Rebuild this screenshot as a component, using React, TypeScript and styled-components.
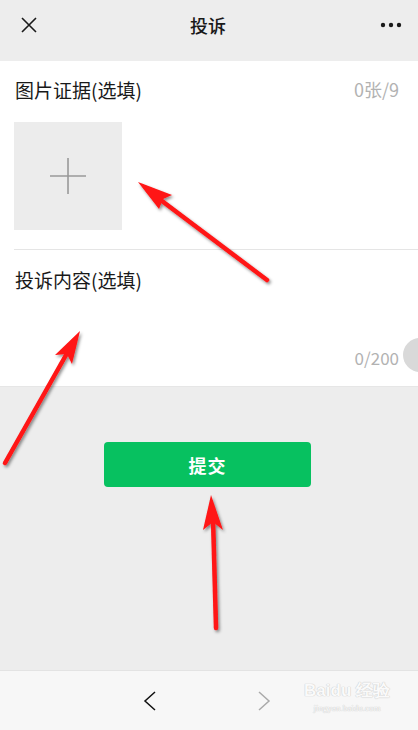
import React from "react";
import styled, { createGlobalStyle } from "styled-components";

const GlobalStyle = createGlobalStyle`
  html, body, #root {
    margin: 0;
    padding: 0;
    height: 100%;
  }
  body {
    overflow: hidden;
    font-family: "Noto Sans CJK SC", "Noto Sans", Roboto, sans-serif;
  }
`;

const Page = styled.div`
  position: relative;
  height: 730px;
  display: flex;
  flex-direction: column;
  background: #ededed;
  overflow: hidden;
`;

const Header = styled.div`
  height: 50px;
  display: flex;
  align-items: center;
  justify-content: space-between;
  padding: 0 16px 0 18px;
`;

const Title = styled.h1`
  margin: 0 0 0 -4px;
  font-size: 18px;
  font-weight: 500;
  color: #191919;
`;

const IconBox = styled.div`
  width: 22px;
  height: 22px;
  display: flex;
  align-items: center;
  justify-content: center;
`;

const Section = styled.div`
  margin-top: 11px;
  background: #fff;
  border-bottom: 1px solid #e6e6e6;
`;

const PhotoBlock = styled.div`
  padding: 16px 19px 19px 14px;
`;

const HeadRow = styled.div`
  display: flex;
  justify-content: space-between;
  align-items: center;
  height: 24px;
`;

const Label = styled.span`
  font-size: 19px;
  color: #191919;
  padding-left: 1px;
`;

const Hint = styled.span<{ $size?: number }>`
  font-size: ${(p) => p.$size ?? 18}px;
  color: #b2b2b2;
`;

const UploadBox = styled.div`
  margin-top: 21px;
  width: 108px;
  height: 108px;
  background: #ececec;
  display: flex;
  align-items: center;
  justify-content: center;
`;

const Divider = styled.div`
  margin-left: 14px;
  border-top: 1px solid #e5e5e5;
`;

const ContentBlock = styled.div`
  position: relative;
  padding: 17px 19px 18px 14px;
`;

const TextArea = styled.div`
  height: 57px;
`;

const Counter = styled.div`
  text-align: right;
  height: 20px;
  line-height: 20px;
`;

const FloatBall = styled.div`
  position: absolute;
  right: -19px;
  top: 88px;
  width: 34px;
  height: 34px;
  border-radius: 50%;
  background: #d9d9d9;
`;

const Footer = styled.div`
  flex: 1;
  display: flex;
  justify-content: center;
  align-items: flex-start;
  padding-top: 55px;
`;

const SubmitButton = styled.button`
  width: 207px;
  height: 45px;
  margin-left: -3px;
  border: none;
  border-radius: 4px;
  background: #07c160;
  color: #fff;
  font-family: inherit;
  font-size: 18px;
  font-weight: 700;
  letter-spacing: 1px;
`;

const BottomBar = styled.div`
  position: relative;
  height: 59px;
  border-top: 1px solid #e3e3e3;
  background: #f7f7f7;
  display: flex;
  align-items: center;
  justify-content: center;
  gap: 94px;
  padding-right: 4px;
`;

const Watermark = styled.div`
  position: absolute;
  right: 28px;
  top: 11px;
  display: flex;
  flex-direction: column;
  align-items: center;
  color: #fafafa;
  text-shadow: 0 0 1px #c8c8c8, 0 0 1px #c8c8c8;
  font-family: "Liberation Sans", sans-serif;
  font-weight: 700;
  line-height: 1;
`;

const MarkTop = styled.span`
  font-size: 17px;
`;

const MarkBottom = styled.span`
  margin-top: 5px;
  font-size: 9px;
  font-weight: 400;
  font-family: "Liberation Serif", serif;
`;

const Overlay = styled.svg`
  position: absolute;
  left: 0;
  top: 0;
  pointer-events: none;
`;

const arrows = [
  { shaft: "M267 280 L158 198", head: "138,182 172,195 163,199 159,209" },
  { shaft: "M5 463 L70 348", head: "80,331 72,364 67,354 55,355" },
  { shaft: "M216 628 L213 518", head: "211,495 223,530 213,522 203,530" },
];

export default function App() {
  return (
    <Page>
      <GlobalStyle />
      <Header>
        <IconBox>
          <svg width="18" height="18" viewBox="0 0 18 18">
            <path d="M2 2 L16 16 M16 2 L2 16" stroke="#1a1a1a" strokeWidth="1.6" />
          </svg>
        </IconBox>
        <Title>投诉</Title>
        <IconBox>
          <svg width="22" height="6" viewBox="0 0 22 6">
            <circle cx="3" cy="3" r="2.2" fill="#1a1a1a" />
            <circle cx="11" cy="3" r="2.2" fill="#1a1a1a" />
            <circle cx="19" cy="3" r="2.2" fill="#1a1a1a" />
          </svg>
        </IconBox>
      </Header>

      <Section>
        <PhotoBlock>
          <HeadRow>
            <Label>图片证据(选填)</Label>
            <Hint>0张/9</Hint>
          </HeadRow>
          <UploadBox>
            <svg width="36" height="36" viewBox="0 0 36 36">
              <path d="M18 0 V36 M0 18 H36" stroke="#999" strokeWidth="1.6" />
            </svg>
          </UploadBox>
        </PhotoBlock>
        <Divider />
        <ContentBlock>
          <HeadRow>
            <Label>投诉内容(选填)</Label>
          </HeadRow>
          <TextArea />
          <Counter>
            <Hint $size={17}>0/200</Hint>
          </Counter>
          <FloatBall />
        </ContentBlock>
      </Section>

      <Footer>
        <SubmitButton>提交</SubmitButton>
      </Footer>

      <BottomBar>
        <svg width="20" height="20" viewBox="0 0 20 20">
          <path d="M15 1 L5 10 L15 19" fill="none" stroke="#111" strokeWidth="1.5" />
        </svg>
        <svg width="20" height="20" viewBox="0 0 20 20">
          <path d="M5 1 L15 10 L5 19" fill="none" stroke="#aaa" strokeWidth="1.5" />
        </svg>
        <Watermark>
          <MarkTop>Baidu 经验</MarkTop>
          <MarkBottom>jingyan.baidu.com</MarkBottom>
        </Watermark>
      </BottomBar>

      <Overlay width="418" height="730" viewBox="0 0 418 730">
        <defs>
          <filter id="shadow" x="-20%" y="-20%" width="140%" height="140%">
            <feDropShadow dx="1.5" dy="2" stdDeviation="1.5" floodColor="#000" floodOpacity="0.45" />
          </filter>
        </defs>
        {arrows.map((a, i) => (
          <g key={i} filter="url(#shadow)">
            <path d={a.shaft} stroke="#ff1414" strokeWidth="4.5" strokeLinecap="round" fill="none" />
            <polygon points={a.head} fill="#ff1414" />
          </g>
        ))}
      </Overlay>
    </Page>
  );
}
